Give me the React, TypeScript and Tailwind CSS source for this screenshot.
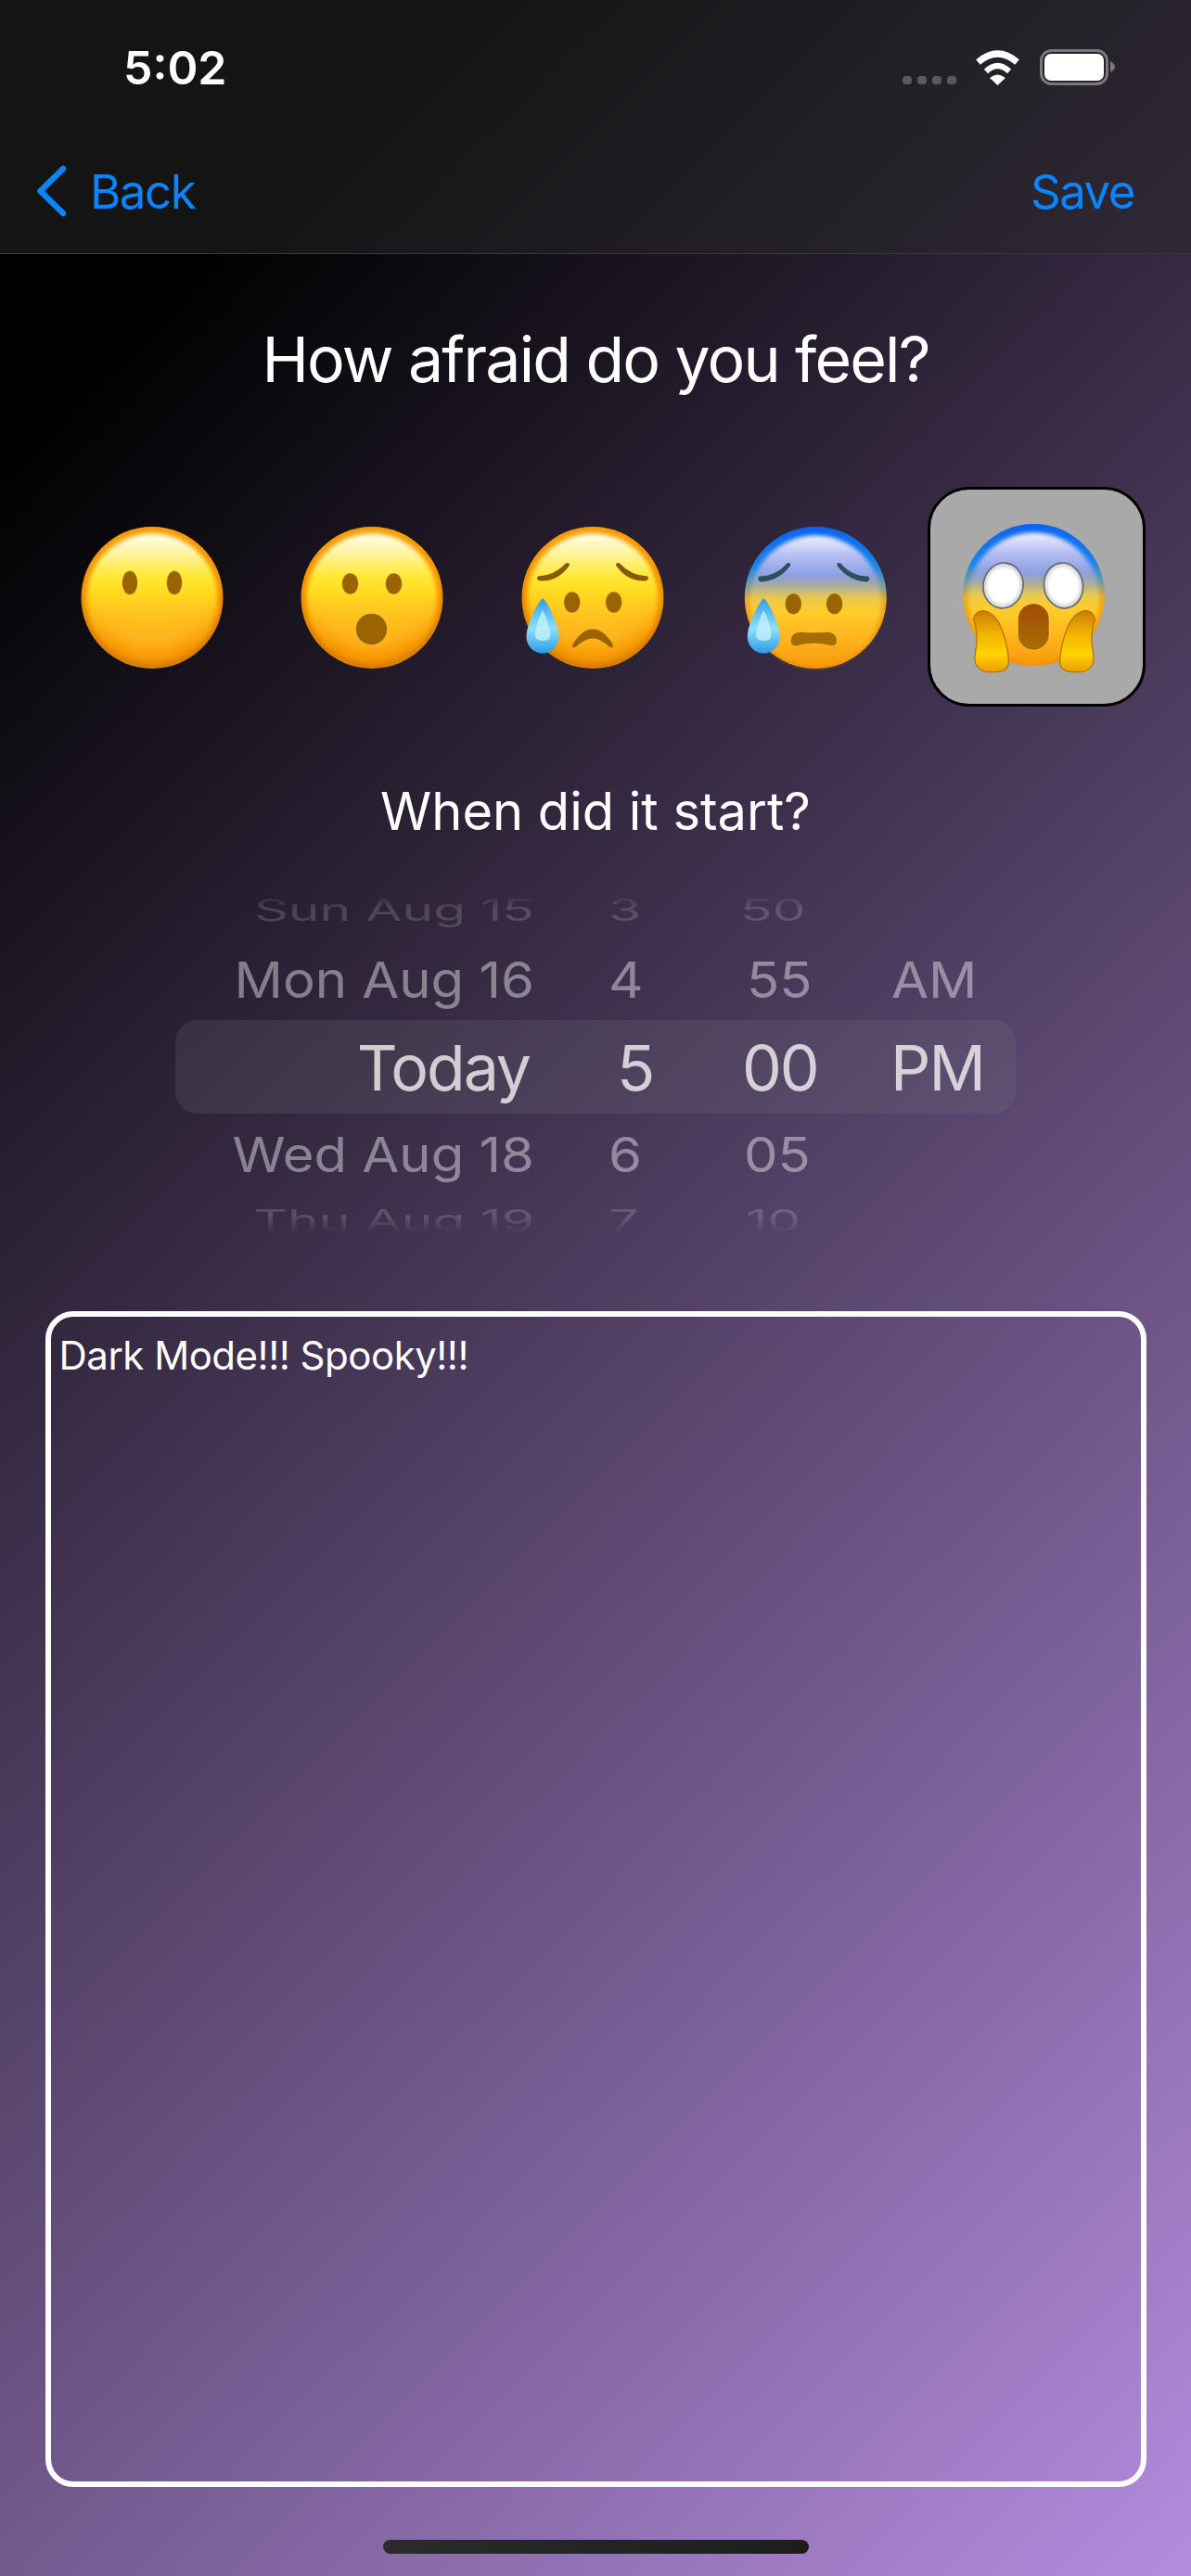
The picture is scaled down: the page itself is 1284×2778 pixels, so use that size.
import React from 'react';

const FaceBase: React.FC<{ id: string; cold?: boolean; dx: number; dy: number; children: React.ReactNode }> = ({ id, cold, dx, dy, children }) => (
    <svg width="170" height="170" viewBox="0 0 170 170" className="overflow-visible">
        <defs>
            <filter id={`${id}-soft`} x="-10%" y="-10%" width="120%" height="120%">
                <feGaussianBlur stdDeviation="2.2" />
            </filter>
            <radialGradient id={`${id}-warm-rim`} cx="50%" cy="46%" r="52%">
                <stop offset="0%" stopColor="#ffc61f" />
                <stop offset="70%" stopColor="#ffb01a" />
                <stop offset="92%" stopColor="#f59600" />
                <stop offset="100%" stopColor="#d97e06" />
            </radialGradient>
            <linearGradient id={`${id}-shine`} x1="0" y1="0" x2="0" y2="1">
                <stop offset="0%" stopColor="#fffde8" stopOpacity="1" />
                <stop offset="14%" stopColor="#fff5a8" stopOpacity="1" />
                <stop offset="32%" stopColor="#ffe93a" stopOpacity="1" />
                <stop offset="45%" stopColor="#ffdc1f" stopOpacity="1" />
                <stop offset="65%" stopColor="#ffc61f" stopOpacity="0.7" />
                <stop offset="90%" stopColor="#ffb01a" stopOpacity="0" />
            </linearGradient>
            <linearGradient id={`${id}-cold-rim`} x1="0" y1="0" x2="0" y2="1">
                <stop offset="0%" stopColor="#0b62f2" />
                <stop offset="28%" stopColor="#1a86e6" />
                <stop offset="42%" stopColor="#7a9c9c" />
                <stop offset="52%" stopColor="#f0a820" />
                <stop offset="100%" stopColor="#f08c05" />
            </linearGradient>
            <linearGradient id={`${id}-cold-face`} x1="0" y1="0" x2="0" y2="1">
                <stop offset="0%" stopColor="#eef0ff" />
                <stop offset="16%" stopColor="#b4bdf3" />
                <stop offset="30%" stopColor="#8d9fe2" />
                <stop offset="38%" stopColor="#a5ab9e" />
                <stop offset="47%" stopColor="#e8c94e" />
                <stop offset="58%" stopColor="#ffcd2a" />
                <stop offset="78%" stopColor="#ffb41e" />
                <stop offset="100%" stopColor="#f79a0c" />
            </linearGradient>
            <linearGradient id={`${id}-drop`} x1="0" y1="0" x2="0" y2="1">
                <stop offset="0%" stopColor="#2f9fe6" />
                <stop offset="55%" stopColor="#8fe0fb" />
                <stop offset="100%" stopColor="#2a9be4" />
            </linearGradient>
            <linearGradient id={`${id}-hand`} x1="0" y1="0" x2="0" y2="1">
                <stop offset="0%" stopColor="#c97c08" />
                <stop offset="35%" stopColor="#f0b000" />
                <stop offset="70%" stopColor="#ffd400" />
                <stop offset="100%" stopColor="#eb9d05" />
            </linearGradient>
            <linearGradient id={`${id}-mouth`} x1="0" y1="0" x2="0" y2="1">
                <stop offset="0%" stopColor="#a34c05" />
                <stop offset="100%" stopColor="#a66f02" />
            </linearGradient>
            <radialGradient id={`${id}-eye`} cx="50%" cy="50%" r="50%">
                <stop offset="72%" stopColor="#ffffff" />
                <stop offset="100%" stopColor="#c9c9c9" />
            </radialGradient>
        </defs>
        <g transform={`translate(${dx} ${dy})`}>
            <circle cx="84" cy="84" r="76.5" fill={`url(#${id}-${cold ? 'cold-rim' : 'warm-rim'})`} />
            {cold
                ? <circle cx="84" cy="88" r="71" fill={`url(#${id}-cold-face)`} filter={`url(#${id}-soft)`} />
                : <ellipse cx="84" cy="84" rx="70" ry="69" fill={`url(#${id}-shine)`} filter={`url(#${id}-soft)`} />}
            {children}
        </g>
    </svg>
);

const Eye = ({ cx, cy, rx = 9, ry = 11.5 }: { cx: number; cy: number; rx?: number; ry?: number }) => (
    <ellipse cx={cx} cy={cy} rx={rx} ry={ry} fill="#9b6304" stroke="#ffe45c" strokeOpacity="0.6" strokeWidth="0.8" />
);

const Drop = ({ id, x }: { id: string; x: number }) => (
    <g transform={`translate(${x} 0)`}>
        <path d="M0 85 C3 85 17.5 112 17.5 126 C17.5 136 10 144 0 144 C-10 144 -17.5 136 -17.5 126 C-17.5 112 -3 85 0 85Z" fill={`url(#${id}-drop)`} />
        <path d="M0 98 C2 100 9 118 8 126 C7 132 -7 132 -8 126 C-9 118 -2 100 0 98Z" fill="#c9f3ff" fillOpacity="0.75" />
    </g>
);

const FaceBlank = () => (
    <FaceBase id="blank" dx={-2} dy={1.5}>
        <Eye cx={60} cy={68} rx={8.5} ry={13} />
        <Eye cx={108} cy={68} rx={8.5} ry={13} />
    </FaceBase>
);

const FaceHushed = () => (
    <FaceBase id="hushed" dx={-2} dy={1.5}>
        <Eye cx={60.5} cy={69} />
        <Eye cx={107.5} cy={69} />
        <ellipse cx="83.5" cy="118" rx="17" ry="17" fill="#9b6304" stroke="#ffe45c" strokeOpacity="0.5" strokeWidth="0.8" />
    </FaceBase>
);

const FaceSad = () => (
    <FaceBase id="sad" dx={-2} dy={1.5}>
        <path d="M25 61 Q43 60 55 47 Q60 45 58.5 50 Q46 67 27 66 Q22 64 25 61Z" fill="#8a5a06" />
        <path d="M143 61 Q125 60 113 47 Q108 45 109.5 50 Q122 67 141 66 Q146 64 143 61Z" fill="#8a5a06" />
        <Eye cx={61.7} cy={89} />
        <Eye cx={106.7} cy={89} />
        <path d="M62 135 Q72 118 84 118 Q96 118 106 135 Q106 139 102 137 Q92 128 84 128 Q76 128 66 137 Q62 139 62 135Z" fill="#9b6304" />
        <Drop id="sad" x={30} />
    </FaceBase>
);

const FaceCold = () => (
    <FaceBase id="sweat" cold dx={0.3} dy={1.5}>
        <path d="M23 61 Q41 61 53 47 Q58 45 56.5 50 Q44 66 25 67 Q20 65 23 61Z" fill="#2d5060" />
        <path d="M141 61 Q123 61 111 47 Q106 45 107.5 50 Q120 66 139 67 Q144 65 141 61Z" fill="#2d5060" />
        <Eye cx={60} cy={90.7} />
        <Eye cx={104.3} cy={90.7} />
        <path d="M57 130 Q58 121 68 121 Q82 122 96 121 Q106 121 107 130 Q107 137 100 136 Q82 131 64 136 Q57 137 57 130Z" fill="#a66d04" stroke="#ffdf5c" strokeOpacity="0.5" strokeWidth="0.8" />
        <Drop id="sweat" x={28} />
    </FaceBase>
);

const FaceScream = () => (
    <FaceBase id="scream" cold dx={-2.5} dy={-1.5}>
        <g transform="translate(0 -2)">
            <ellipse cx="51" cy="76" rx="21.5" ry="24.5" transform="rotate(10 51 76)" fill="url(#scream-eye)" stroke="#5e6a72" strokeWidth="1.6" />
            <ellipse cx="116" cy="76" rx="21" ry="24.5" transform="rotate(-10 116 76)" fill="url(#scream-eye)" stroke="#5e6a72" strokeWidth="1.6" />
            <rect x="67" y="95.5" width="33.5" height="50" rx="16.7" fill="url(#scream-mouth)" stroke="#ffdf5c" strokeOpacity="0.5" strokeWidth="0.8" />
            <path d="M19 112 Q21 103 30 103 Q42 105 49 122 Q56 140 57 158 Q57 168 44 169 Q28 171 22 162 Q19 156 22 142 Q24 126 19 112Z" fill="url(#scream-hand)" stroke="#b96d06" strokeWidth="1.2" />
            <path d="M150 112 Q148 103 139 103 Q127 105 120 122 Q113 140 112 158 Q112 168 125 169 Q141 171 147 162 Q150 156 147 142 Q145 126 150 112Z" fill="url(#scream-hand)" stroke="#b96d06" strokeWidth="1.2" />
        </g>
    </FaceBase>
);

const moods = [FaceBlank, FaceHushed, FaceSad, FaceCold, FaceScream];

const pickerRows = [
    { date: 'Sun Aug 15', hour: '3', min: '50', ampm: '', h: 'h-[62px]', datePad: '', hourPad: 'pl-[80px]', minPad: 'pl-[6px]', ampmPad: 'pl-[8px]', text: 'text-[57px] scale-y-[0.56] text-white/[0.16]' },
    { date: 'Mon Aug 16', hour: '4', min: '55', ampm: 'AM', h: 'h-[88px]', datePad: '', hourPad: 'pl-[80px]', minPad: 'pl-[13px]', ampmPad: 'pl-[9px]', text: 'text-[58px] scale-y-[0.93] text-white/[0.42]' },
    { date: 'Today', hour: '5', min: '00', ampm: 'PM', h: 'h-[101px] rounded-[24px] bg-[#76768033]', datePad: 'pr-[5px]', hourPad: 'pl-[89px]', minPad: 'pl-[8px]', ampmPad: 'pl-[8px]', text: 'text-[68px] tracking-[-0.03em] text-white/75' },
    { date: 'Wed Aug 18', hour: '6', min: '05', ampm: '', h: 'h-[87px]', datePad: '', hourPad: 'pl-[80px]', minPad: 'pl-[10px]', ampmPad: 'pl-[8px]', text: 'text-[58px] scale-y-[0.9] text-white/[0.42]' },
    { date: 'Thu Aug 19', hour: '7', min: '10', ampm: '', h: 'h-[56px]', datePad: '', hourPad: 'pl-[80px]', minPad: 'pl-[12px]', ampmPad: 'pl-[8px]', text: 'text-[57px] scale-y-[0.58] text-white/[0.16]' },
];

const App: React.FC = () => {
    return (
        <div className="w-[1284px] min-h-[2778px] flex flex-col font-[Inter,sans-serif] text-white bg-[linear-gradient(135deg,#000_12%,#b48cde_100%)]">
            <header className="h-[274px] pb-[7px] border-b border-[#3a383c] bg-[#28282880]">
                <div className="h-[146px] flex items-center justify-between pl-[133px] pr-[82px]">
                    <span className="text-[50px] font-semibold leading-none">5:02</span>
                    <svg width="229" height="39" viewBox="0 0 229 39" className="mt-[-2px]">
                        <g fill="#5a585c">
                            <rect x="0" y="29" width="10" height="9" rx="3.5" />
                            <rect x="16" y="29" width="10" height="9" rx="3.5" />
                            <rect x="32" y="29" width="10" height="9" rx="3.5" />
                            <rect x="48" y="29" width="10" height="9" rx="3.5" />
                        </g>
                        <path d="M81.5 14 Q102.5 -4 123.5 14" fill="none" stroke="#fff" strokeWidth="7" />
                        <path d="M90 24 Q102.5 12 115 24" fill="none" stroke="#fff" strokeWidth="6" />
                        <path d="M94 31 Q102.5 24 111 31 L102.5 39 Z" fill="#fff" />
                        <rect x="149.5" y="1.5" width="71" height="36" rx="11" fill="none" stroke="#7a787c" strokeWidth="3" />
                        <rect x="153" y="5" width="64" height="29" rx="7" fill="#fff" />
                        <path d="M224 13 Q229 16 229 19 Q229 22 224 25Z" fill="#7a787c" />
                    </svg>
                </div>
                <nav className="h-[120px] flex items-center justify-between pl-[39px] pr-[61px] text-[#0a84ff] text-[51px] tracking-[-1.5px] leading-none">
                    <div className="flex items-center gap-[25px]">
                        <svg width="33" height="56" viewBox="0 0 33 56">
                            <path d="M29 4 L4.5 28 L29 52" fill="none" stroke="#0a84ff" strokeWidth="6.5" strokeLinecap="round" strokeLinejoin="round" />
                        </svg>
                        <span>Back</span>
                    </div>
                    <span>Save</span>
                </nav>
            </header>

            <main className="flex flex-col items-center">
                <h1 className="mt-[68px] h-[90px] flex items-center text-[68px] tracking-[-0.027em] font-normal leading-none">How afraid do you feel?</h1>

                <div className="mt-[93px] w-full px-[49px] flex justify-between">
                    {moods.map((Face, index) => (
                        <div
                            key={index}
                            className={`w-[235px] h-[237px] flex items-center justify-center rounded-[45px] ${index === 4 ? 'bg-[#a9a9a9] border-[3px] border-black' : ''}`}
                        >
                            <Face />
                        </div>
                    ))}
                </div>

                <h2 className="mt-[73px] h-[80px] flex items-center text-[56px] font-normal leading-none">When did it start?</h2>

                <div className="mt-[35px] h-[394px] w-[906px] flex flex-col [mask-image:linear-gradient(to_bottom,transparent_12px,black_30px,black_362px,transparent_380px)]">
                    {pickerRows.map((row) => (
                        <div key={row.date} className={`grid grid-cols-[387px_216px_160px_143px] items-center leading-none ${row.h}`}>
                            <span className={`text-right origin-center whitespace-nowrap ${row.datePad} ${row.text}`}>{row.date}</span>
                            <span className={`origin-center ${row.hourPad} ${row.text}`}>{row.hour}</span>
                            <span className={`origin-center ${row.minPad} ${row.text}`}>{row.min}</span>
                            <span className={`origin-center ${row.ampmPad} ${row.text}`}>{row.ampm}</span>
                        </div>
                    ))}
                </div>

                <div className="mt-[70px] w-[1187px] h-[1268px] border-[6px] border-white rounded-[30px] px-[9px] py-[17px]">
                    <p className="text-[42px] tracking-[-0.5px] leading-[50px]">Dark Mode!!! Spooky!!!</p>
                </div>

                <div className="mt-[57px] w-[459px] h-[15px] rounded-full bg-[linear-gradient(to_right,#2b2b2b,#1d1d1d)]" />
            </main>
        </div>
    );
};

export default App;
